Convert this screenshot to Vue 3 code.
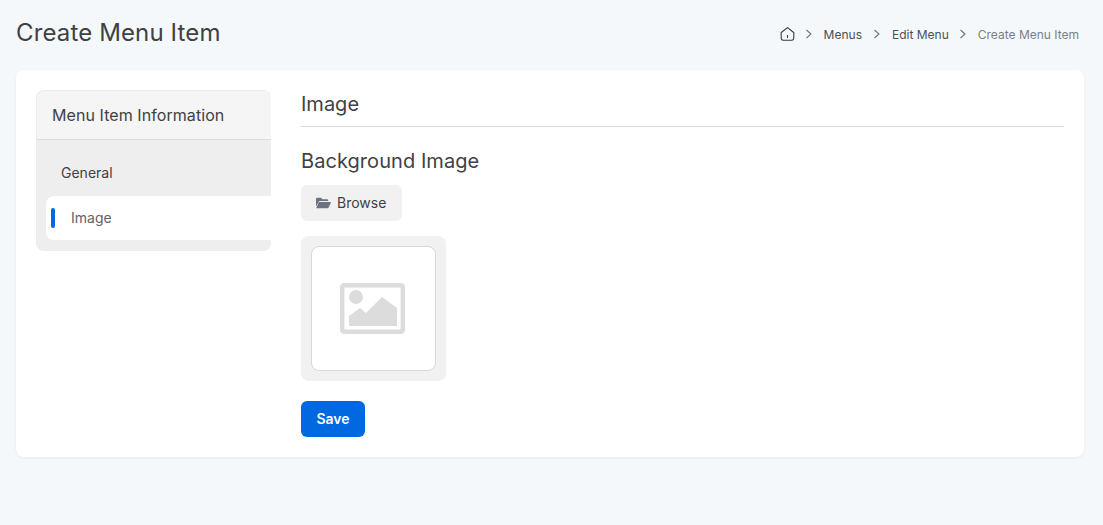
<template>
  <div class="page">
    <div class="page-header">
      <h1>Create Menu Item</h1>
      <ol class="breadcrumb">
        <li>
          <svg width="15" height="16" viewBox="0 0 15 16" fill="none" stroke="#343a40" stroke-width="1.1" stroke-linejoin="round" stroke-linecap="round">
            <path d="M7.5 1.6 L13.4 6.2 Q13.9 6.5 13.9 7 L13.7 12.6 Q13.6 14.2 11.9 14.2 L3.1 14.2 Q1.4 14.2 1.3 12.6 L1.1 7 Q1.1 6.5 1.6 6.2 Z" />
            <path d="M7.5 9.6 V11.4" />
          </svg>
        </li>
        <template v-for="(crumb, index) in crumbs" :key="crumb">
          <li class="sep">
            <svg width="8" height="10" viewBox="0 0 8 10" fill="none" stroke="#6c757d" stroke-width="1.1"><path d="M1.5 1 L6 5 L1.5 9" /></svg>
          </li>
          <li :class="{ current: index === crumbs.length - 1 }">{{ crumb }}</li>
        </template>
      </ol>
    </div>

    <div class="card">
      <div class="side">
        <div class="side-title">Menu Item Information</div>
        <div class="side-list">
          <div class="side-item">General</div>
          <div class="side-item active">Image</div>
        </div>
      </div>

      <div class="content">
        <h2>Image</h2>
        <h3>Background Image</h3>
        <button class="browse">
          <svg width="15" height="12" viewBox="0 0 15 12"><path fill="#6b7280" d="M0 2 Q0 .8 1.2 .8 H5 L6.4 2.2 H11 Q12.2 2.2 12.2 3.4 V4 H4 Q3 4 2.5 5 L0 9.4 Z M3.4 5 H14.2 Q15.2 5 14.8 6 L12.6 10.4 Q12.2 11.2 11.2 11.2 H.8 Q.2 11.2 .5 10.6 L2.6 5.6 Q2.8 5 3.4 5 Z" /></svg>
          Browse
        </button>
        <div class="thumb-box">
          <div class="thumb">
            <svg class="placeholder" width="65" height="51" viewBox="0 0 65 51">
              <rect x="2.2" y="2.2" width="60.6" height="46.6" rx="2" fill="none" stroke="#dcdcdc" stroke-width="4.4" />
              <circle cx="16" cy="14" r="7" fill="#dcdcdc" />
              <path fill="#dcdcdc" d="M9 43 V33 L20 25 L26 30 L42 14 L57 25 V43 Z" />
            </svg>
          </div>
        </div>
        <button class="save">Save</button>
      </div>
    </div>
  </div>
</template>

<script setup>
const crumbs = ['Menus', 'Edit Menu', 'Create Menu Item']
</script>

<style>
html, body {
  margin: 0;
  background: #f5f8fb;
}
</style>

<style scoped>
.page {
  height: 525px;
  box-sizing: border-box;
  padding: 0 19px 0 16px;
  font-family: Inter, "Liberation Sans", sans-serif;
  color: #3f4143;
}

.page-header {
  height: 70px;
  display: flex;
  justify-content: space-between;
  align-items: center;
  padding-bottom: 4px;
  box-sizing: border-box;
}

h1 {
  margin: 0;
  font-size: 24px;
  font-weight: 400;
  letter-spacing: .13px;
  line-height: 32px;
}

.breadcrumb {
  display: flex;
  align-items: center;
  list-style: none;
  margin: 2px 0 0;
  padding: 0 5px 0 0;
  font-size: 12px;
  color: #495057;
}

.breadcrumb li {
  display: flex;
  align-items: center;
}

.breadcrumb li:nth-child(3) {
  margin-right: 1px;
}

.sep {
  margin: 0 10.5px;
}

.current {
  color: #7a8087;
}

.card {
  display: flex;
  height: 387px;
  box-sizing: border-box;
  padding: 20px;
  background: #fff;
  border-radius: 8px;
  box-shadow: 0 1px 3px rgba(0, 0, 0, .06);
}

.side {
  width: 235px;
  height: 161px;
  flex-shrink: 0;
  box-sizing: border-box;
  background: #eee;
  border: 1px solid #ececec;
  border-right: none;
  border-radius: 8px;
  overflow: hidden;
}

.side-title {
  height: 48px;
  padding-left: 15px;
  display: flex;
  align-items: center;
  background: #f5f5f5;
  border-bottom: 1px solid #dedede;
  font-size: 16px;
  font-weight: 400;
  letter-spacing: .07px;
}

.side-list {
  padding: 10px 0 0 9px;
}

.side-item {
  height: 44px;
  display: flex;
  align-items: center;
  padding-left: 15px;
  font-size: 14px;
}

.side-item.active {
  position: relative;
  margin-top: 2px;
  padding-left: 25px;
  padding-bottom: 2px;
  box-sizing: border-box;
  background: #fff;
  border-radius: 8px 0 0 8px;
  color: #5f6368;
}

.side-item.active::before {
  content: "";
  position: absolute;
  left: 5px;
  top: 12px;
  width: 4px;
  height: 20px;
  border-radius: 2px;
  background: #0068e0;
}

.content {
  flex: 1;
  margin-left: 30px;
}

h2 {
  margin: 0 0 20px;
  padding-bottom: 8px;
  height: 28px;
  font-size: 20px;
  font-weight: 400;
  line-height: 28px;
  border-bottom: 1px solid #d5d8e2;
}

h3 {
  margin: 0 0 10px;
  font-size: 20px;
  font-weight: 400;
  letter-spacing: .06px;
  line-height: 28px;
}

.browse {
  display: flex;
  align-items: center;
  gap: 6px;
  height: 36px;
  padding: 0 16px 1px 15px;
  border: none;
  border-radius: 6px;
  background: #f1f1f1;
  color: #3f4143;
  font: 400 14px Inter, "Liberation Sans", sans-serif;
}

.thumb-box {
  width: 145px;
  height: 145px;
  box-sizing: border-box;
  margin: 15px 0 20px;
  padding: 10px;
  background: #f1f1f1;
  border-radius: 8px;
}

.thumb {
  width: 125px;
  height: 125px;
  box-sizing: border-box;
  display: flex;
  align-items: center;
  justify-content: center;
  background: #fff;
  border: 1px solid #d5d8e2;
  border-radius: 8px;
}

.placeholder {
  margin-right: 2px;
}

.save {
  display: block;
  width: 64px;
  height: 36px;
  padding: 0 0 2px;
  border: none;
  border-radius: 6px;
  background: #0068e0;
  color: #fff;
  font: 600 14px Inter, "Liberation Sans", sans-serif;
}
</style>
